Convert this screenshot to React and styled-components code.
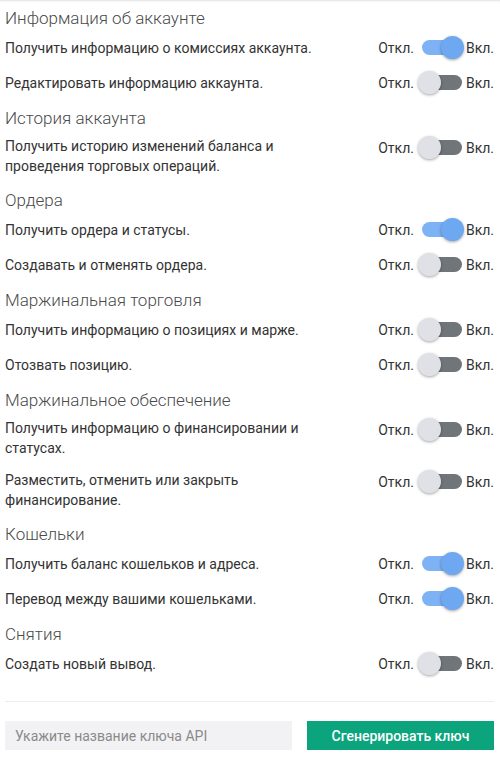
import { useState } from "react";
import styled, { createGlobalStyle } from "styled-components";

const GlobalStyle = createGlobalStyle`
  body {
    margin: 0;
    background: #fff;
    font-family: Roboto, "Noto Sans", sans-serif;
    color: #333;
  }
`;

const Page = styled.div`
  width: 500px;
  height: 762px;
  box-sizing: border-box;
  padding: 0 6px 0 5px;
  box-shadow: inset 0 2px 2px -1px rgba(0, 0, 0, 0.12);
  overflow: hidden;
`;

const SectionTitle = styled.h3`
  margin: 0;
  padding: 8px 0 2px;
  font-size: 17px;
  line-height: 20px;
  font-weight: 300;
  color: #4a4a4a;
`;

const Row = styled.div`
  display: flex;
  align-items: flex-start;
  justify-content: space-between;
  padding: 6px 0;
`;

const Label = styled.div`
  display: flex;
  align-items: center;
  max-width: 330px;
  min-height: 23px;
  font-size: 14px;
  line-height: 20px;
  color: #333;
`;

const SwitchWrap = styled.div`
  display: flex;
  align-items: center;
  height: 23px;
  font-size: 14px;
  color: #333;
`;

const Track = styled.button`
  position: relative;
  width: 40px;
  height: 15px;
  margin: 0 4px 0 8px;
  padding: 0;
  border: none;
  border-radius: 8px;
  cursor: pointer;
  background: ${(p) => (p.$on ? "#7db2f4" : "#6f7579")};
`;

const Thumb = styled.span`
  position: absolute;
  top: -4px;
  left: ${(p) => (p.$on ? "19px" : "-4px")};
  width: 23px;
  height: 23px;
  border-radius: 50%;
  background: ${(p) => (p.$on ? "#6ea8f1" : "#dfe1e6")};
  box-shadow: 0 1px 3px rgba(0, 0, 0, 0.35);
`;

const Divider = styled.hr`
  margin: 20px 0 19px;
  border: none;
  border-top: 1px solid #ececec;
`;

const Footer = styled.div`
  display: flex;
  gap: 15px;
`;

const Input = styled.input`
  flex: 0 0 287px;
  height: 29px;
  box-sizing: border-box;
  padding: 0 10px;
  border: none;
  background: #f2f2f4;
  font-family: Roboto, sans-serif;
  font-size: 14px;
  color: #333;
  outline: none;
  &::placeholder {
    color: #8a8a8a;
  }
`;

const GenerateButton = styled.button`
  flex: 1;
  height: 29px;
  border: none;
  background: #0ba47d;
  color: #fff;
  font-family: Roboto, sans-serif;
  font-size: 14px;
  font-weight: 500;
  cursor: pointer;
`;

const sections = [
  {
    title: "Информация об аккаунте",
    items: [
      ["Получить информацию о комиссиях аккаунта.", true],
      ["Редактировать информацию аккаунта.", false],
    ],
  },
  {
    title: "История аккаунта",
    items: [
      ["Получить историю изменений баланса и проведения торговых операций.", false],
    ],
  },
  {
    title: "Ордера",
    items: [
      ["Получить ордера и статусы.", true],
      ["Создавать и отменять ордера.", false],
    ],
  },
  {
    title: "Маржинальная торговля",
    items: [
      ["Получить информацию о позициях и марже.", false],
      ["Отозвать позицию.", false],
    ],
  },
  {
    title: "Маржинальное обеспечение",
    items: [
      ["Получить информацию о финансировании и статусах.", false],
      ["Разместить, отменить или закрыть финансирование.", false],
    ],
  },
  {
    title: "Кошельки",
    items: [
      ["Получить баланс кошельков и адреса.", true],
      ["Перевод между вашими кошельками.", true],
    ],
  },
  {
    title: "Снятия",
    items: [["Создать новый вывод.", false]],
  },
];

function Toggle({ initial }) {
  const [on, setOn] = useState(initial);
  return (
    <SwitchWrap>
      Откл.
      <Track $on={on} onClick={() => setOn((v) => !v)}>
        <Thumb $on={on} />
      </Track>
      Вкл.
    </SwitchWrap>
  );
}

export default function App() {
  return (
    <>
      <GlobalStyle />
      <Page>
        {sections.map((s) => (
          <section key={s.title}>
            <SectionTitle>{s.title}</SectionTitle>
            {s.items.map(([text, on]) => (
              <Row key={text}>
                <Label>{text}</Label>
                <Toggle initial={on} />
              </Row>
            ))}
          </section>
        ))}
        <Divider />
        <Footer>
          <Input placeholder="Укажите название ключа API" />
          <GenerateButton>Сгенерировать ключ</GenerateButton>
        </Footer>
      </Page>
    </>
  );
}
